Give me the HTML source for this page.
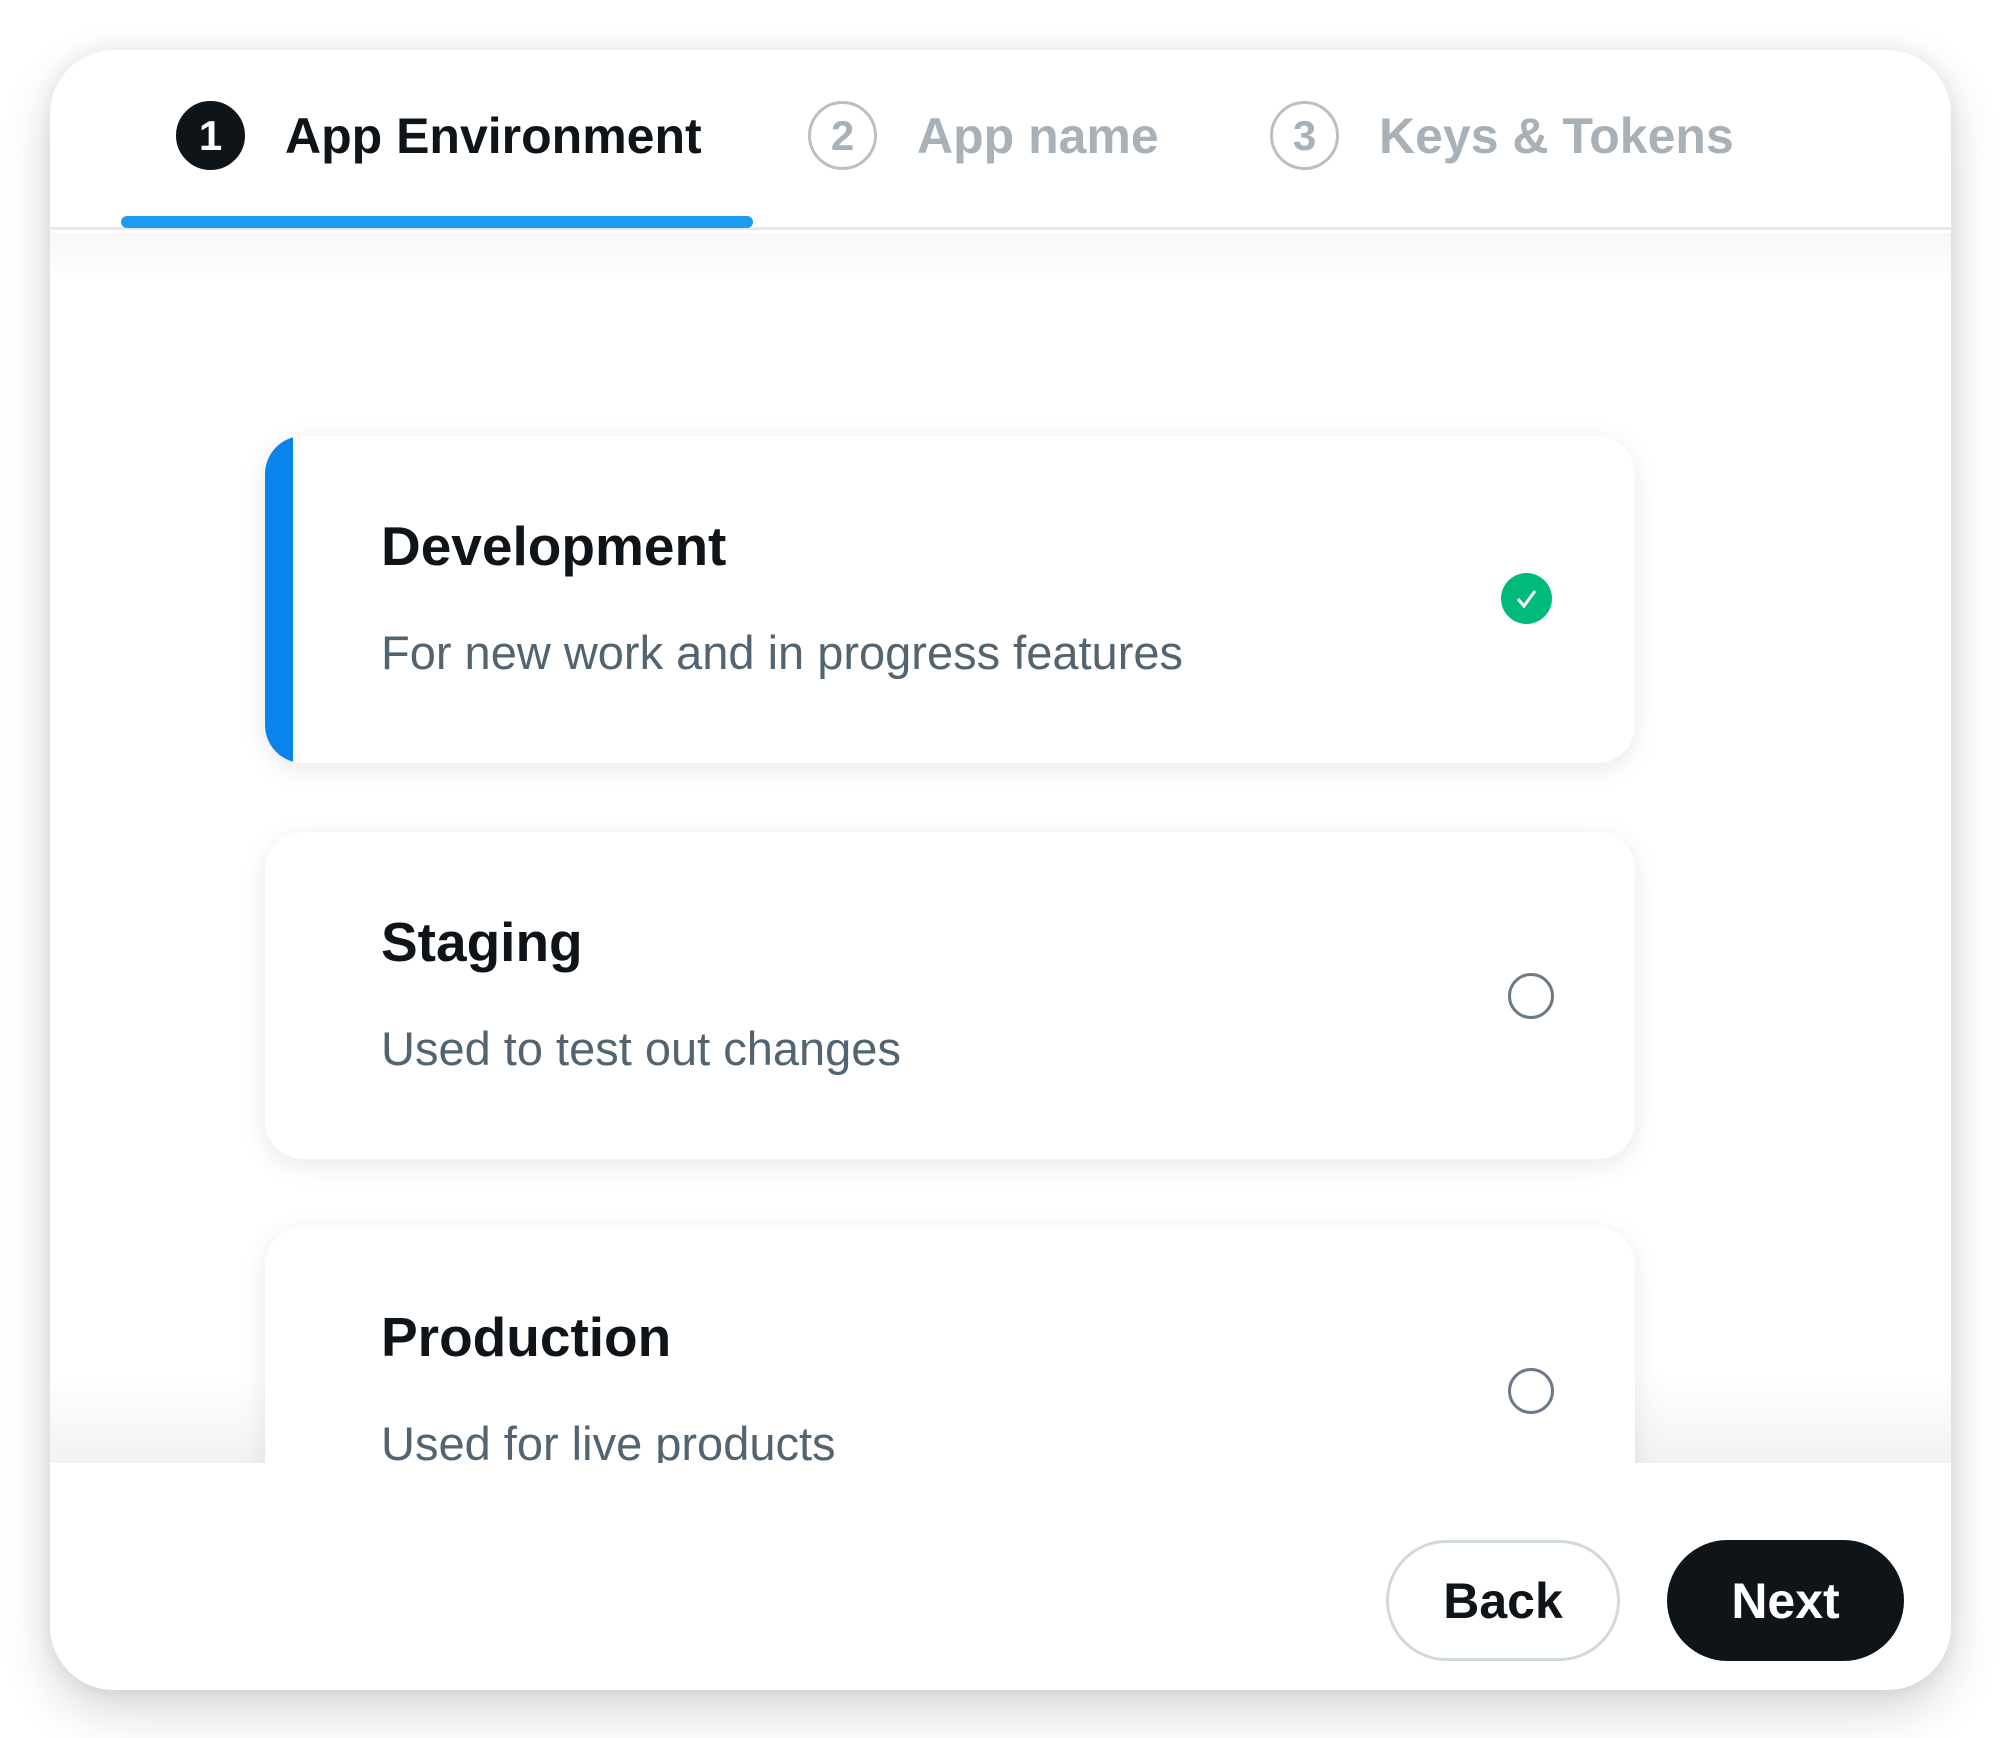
<!DOCTYPE html>
<html><head><meta charset="utf-8"><style>
*{margin:0;padding:0;box-sizing:border-box}
html,body{width:2000px;height:1738px;background:#fff;overflow:hidden;font-family:"Liberation Sans",sans-serif}
.modal{position:absolute;left:50px;top:50px;width:1901px;height:1640px;background:#fff;border-radius:64px;box-shadow:0 20px 50px rgba(0,0,0,0.16),0 0 20px rgba(0,0,0,0.08);overflow:hidden}
.hdr{position:absolute;left:0;top:0;width:100%;height:180px;border-bottom:3px solid #e6e9eb}
.bar{position:absolute;left:71px;top:166px;width:632px;height:12px;background:#1d9bf0;border-radius:6px}
.step{position:absolute;top:51px;height:69px;display:flex;align-items:center;font-weight:bold;font-size:50px;color:#a8b1b8}
.num{width:69px;height:69px;border-radius:50%;border:3px solid #b8c0c6;display:flex;align-items:center;justify-content:center;font-size:42px;margin-right:40px;color:#a8b1b8}
.step.on{color:#0f1419}.step.on .num{background:#0f1419;border-color:#0f1419;color:#fff}
.body{position:absolute;left:0;top:183px;width:100%;height:1230px;background:linear-gradient(#f7f7f8 0,#fff 50px,#fff 1140px,#f1f2f3 1230px);overflow:hidden}
.card{position:absolute;left:215px;width:1370px;height:327px;background:#fff;border-radius:38px;box-shadow:0 6px 26px rgba(0,0,0,0.09);overflow:hidden}
.card.sel::before{content:"";position:absolute;left:0;top:0;width:28px;height:100%;background:#0a84ed}
.t{position:absolute;left:116px;top:78px;font-weight:bold;font-size:55px;color:#0f1419}
.s{position:absolute;left:116px;top:189px;font-size:47px;color:#536471}
.rad{position:absolute;left:1243px;top:141px;width:46px;height:46px;border-radius:50%;border:3px solid #6b7a86}
.chk{position:absolute;left:1236px;top:137px;width:51px;height:51px;border-radius:50%;background:#00ba7c}
.foot{position:absolute;left:0;top:1413px;width:100%;height:227px;background:#fff}
.btn{position:absolute;top:77px;height:121px;border-radius:61px;display:flex;align-items:center;justify-content:center;font-weight:bold;font-size:50px}
</style></head><body>
<div class="modal">
 <div class="hdr">
  <div class="step on" style="left:126px"><div class="num">1</div>App Environment</div>
  <div class="step" style="left:758px"><div class="num">2</div>App name</div>
  <div class="step" style="left:1220px"><div class="num">3</div>Keys &amp; Tokens</div>
  <div class="bar"></div>
 </div>
 <div class="body">
  <div class="card sel" style="top:203px"><div class="t">Development</div><div class="s">For new work and in progress features</div>
   <div class="chk"><svg width="51" height="51" viewBox="0 0 51 51"><path d="M17 26l6 7 11-15" fill="none" stroke="#fff" stroke-width="3"/></svg></div></div>
  <div class="card" style="top:599px"><div class="t">Staging</div><div class="s">Used to test out changes</div><div class="rad"></div></div>
  <div class="card" style="top:994px"><div class="t">Production</div><div class="s">Used for live products</div><div class="rad"></div></div>
 </div>
 <div class="foot">
  <div class="btn" style="left:1336px;width:234px;border:3px solid #cfd9de;color:#0f1419">Back</div>
  <div class="btn" style="left:1617px;width:237px;background:#0f1419;color:#fff">Next</div>
 </div>
</div>
</body></html>
